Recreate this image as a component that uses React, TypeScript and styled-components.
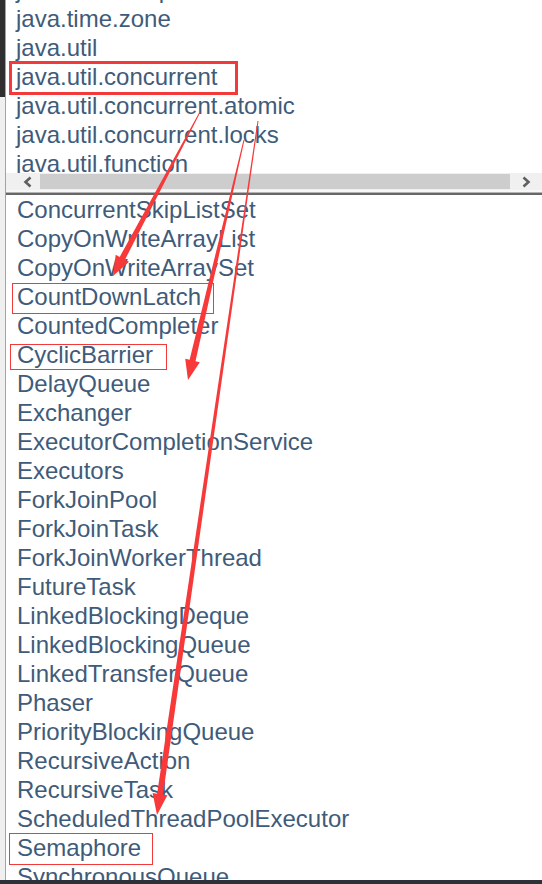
import React from "react";
import styled, { createGlobalStyle } from "styled-components";

const Global = createGlobalStyle`
  html, body { margin: 0; padding: 0; background: #ffffff; }
  body { width: 542px; height: 884px; overflow: hidden; }
  #root { width: 542px; height: 884px; }
`;

const Screen = styled.div`
  position: relative;
  width: 542px;
  height: 884px;
  display: flex;
  flex-direction: column;
  font-family: "Liberation Sans", Arial, sans-serif;
`;

const Page = styled.div`
  display: flex;
  height: 880px;
  overflow: hidden;
`;

const Gutter = styled.div`
  width: 5px;
  flex: none;
  background: linear-gradient(#2f2f2f 0 97px, #f0f0f0 97px);
`;

const Main = styled.div`
  flex: 1;
  min-width: 0;
  display: flex;
  flex-direction: column;
  border-left: 1px solid #a3a3a3;
  background: #ffffff;
`;

const Viewport = styled.div<{ $height?: number }>`
  height: ${(p) => (p.$height ? `${p.$height}px` : "auto")};
  flex: ${(p) => (p.$height ? "none" : "1")};
  overflow: hidden;
`;

const List = styled.div<{ $offset: number }>`
  margin-top: ${(p) => p.$offset}px;
  display: flex;
  flex-direction: column;
`;

type Frame = { left: number; top: number; width: number; height: number; weight: number };

const Row = styled.div<{ $indent: number; $frame?: Frame }>`
  position: relative;
  height: 29px;
  line-height: 29px;
  padding-left: ${(p) => p.$indent}px;
  font-size: 24px;
  color: #3f5b7a;
  white-space: nowrap;
  &::after {
    content: "";
    display: ${(p) => (p.$frame ? "block" : "none")};
    position: absolute;
    left: ${(p) => p.$frame?.left ?? 0}px;
    top: ${(p) => p.$frame?.top ?? 0}px;
    width: ${(p) => p.$frame?.width ?? 0}px;
    height: ${(p) => p.$frame?.height ?? 0}px;
    border: ${(p) => p.$frame?.weight ?? 0}px solid #f23a3a;
    box-sizing: border-box;
  }
`;

const HScroll = styled.div`
  height: 17px;
  flex: none;
  display: flex;
  align-items: stretch;
  background: #f0f0f0;
`;

const ScrollButton = styled.div<{ $width: number; $pad: number }>`
  width: ${(p) => p.$width}px;
  flex: none;
  box-sizing: border-box;
  padding-left: ${(p) => p.$pad}px;
  display: flex;
  align-items: center;
  justify-content: center;
`;

const Thumb = styled.div`
  flex: 1;
  margin: 1px 0;
  background: #cdcdcd;
`;

const Splitter = styled.div`
  height: 5px;
  flex: none;
  background: linear-gradient(#f7f7f7 0 2px, #b4b4b4 2px 3px, #676767 3px 5px);
`;

const BottomBar = styled.div`
  height: 4px;
  flex: none;
  background: #2c3237;
`;

const Overlay = styled.svg`
  position: absolute;
  left: 0;
  top: 0;
  pointer-events: none;
`;

const Chevron = ({ dir }: { dir: "left" | "right" }) => (
  <svg width="10" height="12" viewBox="0 0 10 12">
    <path
      d={dir === "left" ? "M7.5 1.5 L2.5 6 L7.5 10.5" : "M2.5 1.5 L7.5 6 L2.5 10.5"}
      fill="none"
      stroke="#5f5f5f"
      strokeWidth="2.6"
    />
  </svg>
);

type Arrow = {
  x1: number; y1: number; x2: number; y2: number;
  w1: number; w2: number; head: number; headW: number;
};

const arrowPoints = (a: Arrow) => {
  const dx = a.x2 - a.x1;
  const dy = a.y2 - a.y1;
  const len = Math.hypot(dx, dy);
  const ux = dx / len;
  const uy = dy / len;
  const nx = -uy;
  const ny = ux;
  const bx = a.x2 - ux * a.head;
  const by = a.y2 - uy * a.head;
  const p = (x: number, y: number, s: number) => `${(x + nx * s).toFixed(1)},${(y + ny * s).toFixed(1)}`;
  return [
    p(a.x1, a.y1, a.w1 / 2),
    p(bx, by, a.w2 / 2),
    p(bx, by, a.headW / 2),
    `${a.x2},${a.y2}`,
    p(bx, by, -a.headW / 2),
    p(bx, by, -a.w2 / 2),
    p(a.x1, a.y1, -a.w1 / 2),
  ].join(" ");
};

const arrows: Arrow[] = [
  { x1: 200, y1: 112, x2: 113, y2: 276, w1: 1, w2: 6, head: 20, headW: 15 },
  { x1: 244, y1: 140, x2: 188, y2: 380, w1: 1, w2: 6, head: 20, headW: 15 },
  { x1: 258, y1: 121, x2: 157, y2: 815, w1: 1, w2: 6, head: 21, headW: 15 },
];

const topItems: { text: string; frame?: Frame }[] = [
  { text: "java.time.temporal" },
  { text: "java.time.zone" },
  { text: "java.util" },
  { text: "java.util.concurrent", frame: { left: 3, top: -1, width: 229, height: 34, weight: 3 } },
  { text: "java.util.concurrent.atomic" },
  { text: "java.util.concurrent.locks" },
  { text: "java.util.function" },
  { text: "java.util.jar" },
];

const bottomItems: { text: string; frame?: Frame }[] = [
  { text: "ConcurrentSkipListSet" },
  { text: "CopyOnWriteArrayList" },
  { text: "CopyOnWriteArraySet" },
  { text: "CountDownLatch", frame: { left: 6, top: 1, width: 202, height: 31, weight: 1 } },
  { text: "CountedCompleter" },
  { text: "CyclicBarrier", frame: { left: 4, top: 4, width: 157, height: 26, weight: 1 } },
  { text: "DelayQueue" },
  { text: "Exchanger" },
  { text: "ExecutorCompletionService" },
  { text: "Executors" },
  { text: "ForkJoinPool" },
  { text: "ForkJoinTask" },
  { text: "ForkJoinWorkerThread" },
  { text: "FutureTask" },
  { text: "LinkedBlockingDeque" },
  { text: "LinkedBlockingQueue" },
  { text: "LinkedTransferQueue" },
  { text: "Phaser" },
  { text: "PriorityBlockingQueue" },
  { text: "RecursiveAction" },
  { text: "RecursiveTask" },
  { text: "ScheduledThreadPoolExecutor" },
  { text: "Semaphore", frame: { left: 3, top: 0, width: 144, height: 32, weight: 1 } },
  { text: "SynchronousQueue" },
  { text: "ThreadLocalRandom" },
];

export default function App() {
  return (
    <Screen>
      <Global />
      <Page>
        <Gutter />
        <Main>
          <Viewport $height={173}>
            <List $offset={-25}>
              {topItems.map((it) => (
                <Row key={it.text} $indent={10} $frame={it.frame}>
                  {it.text}
                </Row>
              ))}
            </List>
          </Viewport>
          <HScroll>
            <ScrollButton $width={34} $pad={9}>
              <Chevron dir="left" />
            </ScrollButton>
            <Thumb />
            <ScrollButton $width={32} $pad={0}>
              <Chevron dir="right" />
            </ScrollButton>
          </HScroll>
          <Splitter />
          <Viewport>
            <List $offset={0}>
              {bottomItems.map((it) => (
                <Row key={it.text} $indent={11} $frame={it.frame}>
                  {it.text}
                </Row>
              ))}
            </List>
          </Viewport>
        </Main>
      </Page>
      <BottomBar />
      <Overlay width="542" height="884" viewBox="0 0 542 884">
        {arrows.map((a, i) => (
          <polygon key={i} points={arrowPoints(a)} fill="#f7393a" />
        ))}
      </Overlay>
    </Screen>
  );
}
